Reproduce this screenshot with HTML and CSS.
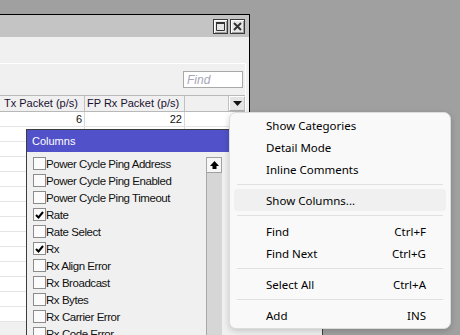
FILE: index.html
```html
<!DOCTYPE html>
<html lang="en">

<head>
    <meta charset="UTF-8">
    <meta name="viewport" content="width=device-width, initial-scale=1.0">
    <title>Columns</title>
    <link rel="stylesheet" href="styles.css">
</head>

<body>
    <div class="desk">
        <div class="window">
            <div class="titlebar">
                <span class="tb-btn">
                    <svg width="9" height="9" viewBox="0 0 9 9"><path d="M0.5 1.5h8v7h-8z" fill="none" stroke="#333"/><path d="M0 0h9v2H0z" fill="#333"/></svg>
                </span>
                <span class="tb-btn">
                    <svg width="9" height="9" viewBox="0 0 9 9"><path d="M1 1L8 8M8 1L1 8" stroke="#333" stroke-width="2"/></svg>
                </span>
            </div>
            <div class="toolbar"></div>
            <div class="content">
                <div class="find-row">
                    <input type="text" class="find" placeholder="Find" aria-label="Find">
                </div>
                <div class="grid">
                    <div class="grid-head">
                        <div class="cell col-a">Tx Packet (p/s)</div>
                        <div class="cell col-b">FP Rx Packet (p/s)</div>
                        <div class="cell col-c"></div>
                        <div class="cell col-menu">
                            <svg width="9" height="5" viewBox="0 0 9 5"><path d="M0 0h9L4.5 5z" fill="#111"/></svg>
                        </div>
                    </div>
                    <div class="grid-row">
                        <div class="cell col-a num">6</div>
                        <div class="cell col-b num">22</div>
                        <div class="cell col-rest"></div>
                    </div>
                    <div class="grid-row"><div class="cell col-a"></div><div class="cell col-b"></div><div class="cell col-rest"></div></div>
                    <div class="grid-row"><div class="cell col-a"></div><div class="cell col-b"></div><div class="cell col-rest"></div></div>
                    <div class="grid-row"><div class="cell col-a"></div><div class="cell col-b"></div><div class="cell col-rest"></div></div>
                    <div class="grid-row"><div class="cell col-a"></div><div class="cell col-b"></div><div class="cell col-rest"></div></div>
                    <div class="grid-row"><div class="cell col-a"></div><div class="cell col-b"></div><div class="cell col-rest"></div></div>
                    <div class="grid-row"><div class="cell col-a"></div><div class="cell col-b"></div><div class="cell col-rest"></div></div>
                    <div class="grid-row"><div class="cell col-a"></div><div class="cell col-b"></div><div class="cell col-rest"></div></div>
                    <div class="grid-row"><div class="cell col-a"></div><div class="cell col-b"></div><div class="cell col-rest"></div></div>
                    <div class="grid-row"><div class="cell col-a"></div><div class="cell col-b"></div><div class="cell col-rest"></div></div>
                    <div class="grid-row"><div class="cell col-a"></div><div class="cell col-b"></div><div class="cell col-rest"></div></div>
                    <div class="grid-row"><div class="cell col-a"></div><div class="cell col-b"></div><div class="cell col-rest"></div></div>
                    <div class="grid-row"><div class="cell col-a"></div><div class="cell col-b"></div><div class="cell col-rest"></div></div>
                    <div class="grid-row"><div class="cell col-a"></div><div class="cell col-b"></div><div class="cell col-rest"></div></div>
                </div>
            </div>
        </div>

        <div class="columns-panel">
            <div class="panel-title">Columns</div>
            <div class="panel-body">
                <ul class="col-list">
                    <li><span class="check"></span>Power Cycle Ping Address</li>
                    <li><span class="check"></span>Power Cycle Ping Enabled</li>
                    <li><span class="check"></span>Power Cycle Ping Timeout</li>
                    <li><span class="check on"><svg width="9" height="8" viewBox="0 0 9 8"><path d="M1 4l2.5 2.5L8 1" fill="none" stroke="#000" stroke-width="2"/></svg></span>Rate</li>
                    <li><span class="check"></span>Rate Select</li>
                    <li><span class="check on"><svg width="9" height="8" viewBox="0 0 9 8"><path d="M1 4l2.5 2.5L8 1" fill="none" stroke="#000" stroke-width="2"/></svg></span>Rx</li>
                    <li><span class="check"></span>Rx Align Error</li>
                    <li><span class="check"></span>Rx Broadcast</li>
                    <li><span class="check"></span>Rx Bytes</li>
                    <li><span class="check"></span>Rx Carrier Error</li>
                    <li><span class="check"></span>Rx Code Error</li>
                </ul>
                <div class="scrollbar">
                    <div class="scroll-up">
                        <svg width="9" height="8" viewBox="0 0 9 8"><path d="M4.5 0L9 5H6.5V8h-4V5H0z" fill="#000"/></svg>
                    </div>
                    <div class="scroll-track"></div>
                </div>
            </div>
        </div>

        <div class="menu">
            <div class="menu-item">Show Categories</div>
            <div class="menu-item">Detail Mode</div>
            <div class="menu-item">Inline Comments</div>
            <div class="menu-sep"></div>
            <div class="menu-item hover">Show Columns...</div>
            <div class="menu-sep"></div>
            <div class="menu-item">Find<span class="key">Ctrl+F</span></div>
            <div class="menu-item">Find Next<span class="key">Ctrl+G</span></div>
            <div class="menu-sep"></div>
            <div class="menu-item">Select All<span class="key">Ctrl+A</span></div>
            <div class="menu-sep"></div>
            <div class="menu-item">Add<span class="key">INS</span></div>
        </div>
    </div>
</body>

</html>
```

FILE: styles.css
```css
* {
    margin: 0;
    padding: 0;
    box-sizing: border-box;
}

body {
    font-family: 'Liberation Sans', Arial, sans-serif;
    font-size: 11px;
    background-color: #a0a0a0;
    color: #111;
    overflow: hidden;
}

.desk {
    position: relative;
    width: 460px;
    height: 335px;
    overflow: hidden;
}

.window {
    width: 250px;
    height: 321px;
    margin-top: 14px;
    background-color: #f0f0f0;
    border-top: 1px solid #000;
    border-right: 1px solid #000;
}

.titlebar {
    height: 22px;
    background-color: #c4c4c4;
    display: flex;
    justify-content: flex-end;
    align-items: center;
    gap: 2px;
    padding-right: 4px;
}

.tb-btn {
    width: 15px;
    height: 15px;
    display: flex;
    align-items: center;
    justify-content: center;
    background-color: #e6e6e6;
    border: 1px solid #3a3a3a;
    box-shadow: inset 1px 1px 0 #fff, inset -1px -1px 0 #a0a0a0;
}

.toolbar {
    height: 26px;
}

.content {
    width: 246px;
    border-top: 1px solid #fff;
    border-right: 1px solid #fff;
}

.find-row {
    display: flex;
    justify-content: flex-end;
    padding: 7px 2px 7px 0;
}

.find {
    width: 60px;
    height: 17px;
    border: 1px solid #a8a8a8;
    background-color: #fff;
    font-family: 'Liberation Sans', Arial, sans-serif;
    font-size: 12px;
    padding: 0 3px;
    outline: none;
}

.find::placeholder {
    color: #a6a6b8;
    font-style: italic;
}

.grid-head,
.grid-row {
    display: flex;
}

.grid-head {
    height: 17px;
    border-top: 1px solid #b8b8b8;
    border-bottom: 1px solid #b8b8b8;
    background-color: #f0f0f0;
}

.grid-row {
    height: 15px;
    background-color: #fff;
    border-bottom: 1px solid #e4e4e4;
}

.cell {
    line-height: 14px;
    white-space: nowrap;
    overflow: hidden;
    border-right: 1px solid #d8d8d8;
}

.grid-head .cell {
    line-height: 15px;
    border-right-color: #c0c0c0;
    color: #1a1030;
}

.col-a {
    width: 85px;
    padding-left: 4px;
}

.col-b {
    width: 100px;
    padding-left: 2px;
}

.col-c {
    width: 44px;
}

.col-rest {
    flex: 1;
    border-right: none;
}

.col-menu {
    width: 16px;
    border: 1px solid #b0b0b0;
    border-top-color: #fff;
    border-left-color: #fff;
    display: flex;
    align-items: center;
    justify-content: center;
    background-color: #e4e4e4;
}

.num {
    text-align: right;
    padding-right: 2px;
}

/* columns chooser */

.columns-panel {
    position: absolute;
    left: 26px;
    top: 129px;
    width: 297px;
    height: 215px;
    border: 1px solid #3c3c3c;
    background-color: #f0f0f0;
}

.panel-title {
    height: 22px;
    line-height: 22px;
    padding-left: 5px;
    background-color: #5151c9;
    color: #fff;
    font-size: 11px;
}

.panel-body {
    display: flex;
    align-items: flex-start;
}

.col-list {
    list-style: none;
    width: 179px;
    padding: 3px 0 0 6px;
    font-size: 11.5px;
}

.col-list li {
    height: 17px;
    display: flex;
    align-items: center;
    letter-spacing: -0.45px;
    white-space: nowrap;
}

.check {
    width: 13px;
    height: 13px;
    margin-right: 0;
    border: 1px solid #8c8c8c;
    background-color: #fbfbfb;
    display: flex;
    align-items: center;
    justify-content: center;
}

.scrollbar {
    width: 16px;
    margin-top: 5px;
    border-left: 1px solid #a8a8a8;
}

.scroll-up {
    height: 16px;
    display: flex;
    align-items: center;
    justify-content: center;
    background-color: #f6f6f6;
    border: 1px solid #a0a0a0;
    border-left: none;
}

.scroll-track {
    height: 180px;
    background-color: #d6d6d6;
}

/* context menu */

.menu {
    position: absolute;
    left: 229px;
    top: 112px;
    width: 222px;
    padding: 1px 4px 2px;
    background-color: #f9f9f9;
    border: 1px solid #dcdcdc;
    border-radius: 7px;
    box-shadow: 0 2px 6px rgba(0, 0, 0, 0.18);
    font-family: 'Noto Sans', 'Open Sans', sans-serif;
    font-size: 11.5px;
    color: #000;
}

.menu-item {
    height: 22px;
    display: flex;
    align-items: center;
    justify-content: space-between;
    padding: 0 20px 0 32px;
    border-radius: 4px;
}

.menu-item.hover {
    background-color: #f0f0f0;
}

.menu-sep {
    height: 9px;
    margin: 0 3px;
    background: linear-gradient(#e0e0e0, #e0e0e0) no-repeat center / 100% 1px;
}
```
